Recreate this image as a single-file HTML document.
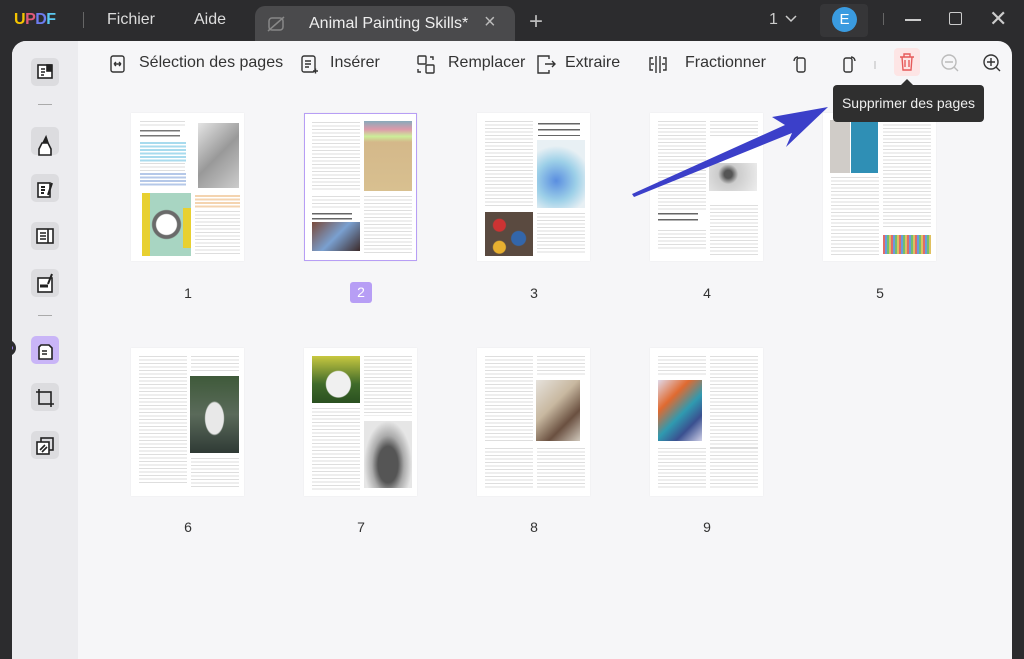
<!DOCTYPE html>
<html><head><meta charset="utf-8">
<style>
*{margin:0;padding:0;box-sizing:border-box}
body{width:1024px;height:659px;background:#2c2c2e;font-family:"Liberation Sans",sans-serif;position:relative;overflow:hidden}
.a{position:absolute}
.win{left:12px;top:41px;width:1000px;height:618px;background:#f6f6f8;border-radius:14px 14px 0 0;overflow:hidden}
.side{left:0;top:0;width:66px;height:618px;background:#ececef}
.sb{position:absolute;left:19px;width:28px;height:28px;border-radius:5px;background:#dcdcdf}
.tb{color:#333;font-size:16px;top:13px}
.pg{position:absolute;width:113px;height:148px;background:#fff;box-shadow:0 0 2px rgba(0,0,0,.06)}
.t{position:absolute;background:repeating-linear-gradient(#dedede 0 1px,transparent 1px 3.5px)}
.im{position:absolute}
.num{position:absolute;font-size:14px;color:#333;width:20px;text-align:center}
svg{position:absolute}
</style></head><body>
<div class="a" style="left:14px;top:11px;font-weight:bold;font-size:16px;letter-spacing:-0.5px"><span style="color:#f5c400">U</span><span style="color:#e05a7a">P</span><span style="color:#6d7cf0">D</span><span style="color:#5ac8f0">F</span></div>
<div class="a" style="left:83px;top:12px;width:1px;height:16px;background:#666"></div>
<div class="a" style="left:107px;top:11px;color:#ddd;font-size:16px">Fichier</div>
<div class="a" style="left:194px;top:11px;color:#ddd;font-size:16px">Aide</div>
<div class="a" style="left:255px;top:6px;width:260px;height:40px;background:#4a4a4c;border-radius:10px 10px 0 0"></div>
<svg style="left:266px;top:14px" width="20" height="20" viewBox="0 0 20 20" fill="none" stroke="#888" stroke-width="1.5"><rect x="3" y="4" width="14" height="12" rx="3"/><path d="M2 17L18 3"/></svg>
<div class="a" style="left:309px;top:15px;color:#eee;font-size:16px">Animal Painting Skills*</div>
<div class="a" style="left:484px;top:11px;color:#bbb;font-size:20px">×</div>
<div class="a" style="left:529px;top:8px;color:#bbb;font-size:24px">+</div>
<div class="a" style="left:769px;top:11px;color:#ccc;font-size:16px">1</div>
<svg style="left:784px;top:14px" width="14" height="10" viewBox="0 0 14 10" fill="none" stroke="#ccc" stroke-width="1.5"><path d="M2 2l5 5 5-5"/></svg>
<div class="a" style="left:820px;top:4px;width:48px;height:33px;background:#363638;border-radius:4px"></div>
<div class="a" style="left:832px;top:7px;width:25px;height:25px;border-radius:50%;background:#3a9be0;color:#fff;font-size:15px;text-align:center;line-height:25px">E</div>
<div class="a" style="left:883px;top:13px;width:1px;height:12px;background:#666"></div>
<div class="a" style="left:905px;top:19px;width:16px;height:1.5px;background:#ccc"></div>
<div class="a" style="left:949px;top:12px;width:13px;height:13px;border:1.5px solid #ccc;border-radius:2px"></div>
<div class="a" style="left:989px;top:6px;color:#ccc;font-size:22px">✕</div>

<div class="a win">
 <div class="a side"></div>
 <div class="sb" style="top:17px"></div>
 <div class="a" style="left:26px;top:63px;width:14px;height:1px;background:#aaa"></div>
 <div class="sb" style="top:86px"></div>
 <div class="sb" style="top:133px"></div>
 <div class="sb" style="top:181px"></div>
 <div class="sb" style="top:228px"></div>
 <div class="a" style="left:26px;top:274px;width:14px;height:1px;background:#aaa"></div>
 <div class="sb" style="top:295px;background:#c9b5f7"></div>
 <div class="sb" style="top:342px"></div>
 <div class="sb" style="top:390px"></div>
 <svg style="left:19px;top:17px" width="28" height="480" viewBox="0 0 28 480" fill="none" stroke="#222" stroke-width="1.6">
  <rect x="7" y="7" width="14" height="13" fill="#fff"/><path d="M10 11h4M10 14h4M10 17h3"/><rect x="16" y="7" width="4" height="6" fill="#222"/>
  <path d="M8 91l3-6h6l3 6v6H8z" fill="#fff"/><path d="M12 85l3-6 2 6" fill="#222"/>
  <rect x="7" y="125" width="12" height="14" fill="#fff"/><path d="M10 129h4M10 132h4M10 135h3M17 137l4-12" stroke-width="2"/>
  <rect x="6" y="171" width="16" height="14" fill="#fff"/><path d="M9 175h6M9 178h6M9 181h6M17 171v14"/>
  <rect x="7" y="220" width="14" height="14" fill="#fff"/><path d="M9 228h8" stroke-width="3"/><path d="M17 226l4-10" stroke-width="2"/>
  <path d="M10 287h8l3 3v11H8v-12z" fill="#fff"/><path d="M11 293h5M11 296h5"/>
  <rect x="8" y="334" width="12" height="12"/><path d="M8 331v3M5 334h3M20 346v3M20 346h3"/>
  <rect x="10" y="380" width="12" height="12"/><rect x="6" y="384" width="12" height="12" fill="#fff"/><path d="M9 392l5-5M11 394l5-5"/>
 </svg>
 <div class="a" style="left:-4px;top:299px;width:8px;height:16px;background:#2c2c2e;border-radius:0 8px 8px 0"></div>
 <div class="a" style="left:-3px;top:305px;width:4px;height:4px;border-radius:50%;background:#9d82f0"></div>

 <svg style="left:96px;top:12px" width="900" height="24" viewBox="0 0 900 24" fill="none" stroke="#333" stroke-width="1.4">
  <rect x="3" y="3" width="13" height="16" rx="2"/><path d="M6 11h7M6 11l2-2M6 11l2 2M13 11l-2-2M13 11l-2 2"/>
  <rect x="194" y="3" width="13" height="16" rx="2"/><path d="M197 8h6M197 11h6M197 14h4M205 18h5M207.5 15.5v5"/>
  <rect x="310" y="3" width="8" height="8" rx="1"/><rect x="318" y="12" width="8" height="8" rx="1"/><path d="M322 4h3v3M313 19h-3v-3"/>
  <path d="M441 6V3h-11v17h11v-3M437 11h10M444 8l3 3-3 3"/>
  <path d="M548 3v17M552 3v17M543 11h3M554 11h3M545 5h-3v12h3M555 5h3v12h-3"/>
  <rect x="689" y="5" width="8" height="14" rx="2"/><path d="M686 8a4 4 0 0 1 4-4"/>
  <rect x="736" y="5" width="8" height="14" rx="2"/><path d="M747 8a4 4 0 0 0-4-4"/>
  <path d="M767 8v8" stroke="#ccc"/>
  <circle cx="841" cy="9" r="7" stroke="#bbb"/><path d="M837 9h8M846 14l4 4" stroke="#bbb"/>
  <circle cx="883" cy="9" r="7"/><path d="M879 9h8M883 5v8M888 14l4 4"/>
 </svg>
 <div class="a tb" style="left:127px">Sélection des pages</div>
 <div class="a tb" style="left:318px">Insérer</div>
 <div class="a tb" style="left:436px">Remplacer</div>
 <div class="a tb" style="left:553px">Extraire</div>
 <div class="a tb" style="left:673px">Fractionner</div>
 <div class="a" style="left:882px;top:7px;width:26px;height:28px;background:#fde5e5;border-radius:4px"></div>
 <svg style="left:886px;top:11px" width="18" height="20" viewBox="0 0 18 20" fill="none" stroke="#e65a5a" stroke-width="1.4"><path d="M2 5h14M6 5V2h6v3M4 5l1 13h8l1-13M7 8v7M11 8v7"/></svg>
</div>

<div class="pg" style="left:131px;top:113px">
 <div class="t" style="left:9px;top:8px;width:45px;height:7px"></div>
 <div class="im" style="left:9px;top:17px;width:40px;height:9px;background:repeating-linear-gradient(#777 0 1.5px,transparent 1.5px 5px)"></div>
 <div class="im" style="left:9px;top:29px;width:46px;height:20px;background:repeating-linear-gradient(#a8dbee 0 2px,transparent 2px 3.5px)"></div>
 <div class="t" style="left:9px;top:50px;width:45px;height:9px"></div>
 <div class="im" style="left:9px;top:60px;width:46px;height:14px;background:repeating-linear-gradient(#b5c8e8 0 2px,transparent 2px 3.5px)"></div>
 <div class="im" style="left:67px;top:10px;width:41px;height:65px;background:linear-gradient(135deg,#e4e4e4,#999 50%,#ccc)"></div>
 <div class="im" style="left:11px;top:80px;width:49px;height:63px;background:radial-gradient(circle at 50% 50%,#fff 0 10px,#6a6a6a 11px 14px,#a8d5c2 15px),#a8d5c2"></div>
 <div class="im" style="left:11px;top:80px;width:8px;height:63px;background:#e8d030"></div>
 <div class="im" style="left:52px;top:95px;width:8px;height:40px;background:#e8d030"></div>
 <div class="im" style="left:64px;top:82px;width:45px;height:14px;background:repeating-linear-gradient(#f4d4b0 0 2px,transparent 2px 3.5px)"></div>
 <div class="t" style="left:64px;top:98px;width:45px;height:44px"></div>
</div>
<div class="pg" style="left:304px;top:113px;border:1.5px solid #b79ef5">
 <div class="t" style="left:7px;top:8px;width:48px;height:70px"></div>
 <div class="t" style="left:7px;top:82px;width:48px;height:14px"></div>
 <div class="im" style="left:7px;top:99px;width:40px;height:8px;background:repeating-linear-gradient(#666 0 1.5px,transparent 1.5px 5px)"></div>
 <div class="im" style="left:7px;top:108px;width:48px;height:29px;background:linear-gradient(135deg,#7a4a3a,#7aa0d0 50%,#3c2a2a)"></div>
 <div class="im" style="left:59px;top:7px;width:48px;height:70px;background:linear-gradient(#8ab 0,#d9a 12%,#ce9 22%,#d4b88a 30%,#d8c090 100%)"></div>
 <div class="t" style="left:59px;top:82px;width:48px;height:58px"></div>
</div>
<div class="pg" style="left:477px;top:113px">
 <div class="t" style="left:8px;top:8px;width:48px;height:85px"></div>
 <div class="im" style="left:61px;top:10px;width:42px;height:13px;background:repeating-linear-gradient(#666 0 1.5px,transparent 1.5px 6px)"></div>
 <div class="im" style="left:60px;top:27px;width:48px;height:68px;background:radial-gradient(circle at 40% 60%,#5a8ee0,#9dd0e8 40%,#e8f0f4 70%)"></div>
 <div class="im" style="left:8px;top:99px;width:48px;height:44px;background:radial-gradient(circle at 30% 30%,#c33 0 6px,transparent 7px),radial-gradient(circle at 70% 60%,#3366aa 0 7px,transparent 8px),radial-gradient(circle at 30% 80%,#e8b030 0 6px,transparent 7px),#5a4a40"></div>
 <div class="t" style="left:60px;top:100px;width:48px;height:42px"></div>
</div>
<div class="pg" style="left:650px;top:113px">
 <div class="t" style="left:8px;top:8px;width:48px;height:90px"></div>
 <div class="t" style="left:60px;top:8px;width:48px;height:15px"></div>
 <div class="im" style="left:59px;top:50px;width:48px;height:28px;background:radial-gradient(circle at 40% 40%,#555 0 4px,#ccc 10px,#eee)"></div>
 <div class="t" style="left:60px;top:92px;width:48px;height:50px"></div>
 <div class="im" style="left:8px;top:100px;width:40px;height:12px;background:repeating-linear-gradient(#666 0 1.5px,transparent 1.5px 6px)"></div>
 <div class="t" style="left:8px;top:117px;width:48px;height:20px"></div>
</div>
<div class="pg" style="left:823px;top:113px">
 <div class="im" style="left:7px;top:7px;width:20px;height:53px;background:#d0ccc8"></div>
 <div class="im" style="left:28px;top:7px;width:27px;height:53px;background:#2f8fb5"></div>
 <div class="t" style="left:60px;top:8px;width:48px;height:106px"></div>
 <div class="t" style="left:8px;top:64px;width:48px;height:78px"></div>
 <div class="im" style="left:60px;top:122px;width:48px;height:19px;background:repeating-linear-gradient(90deg,#e06a6a 0 2px,#6a9ae0 2px 4px,#70c070 4px 6px,#e0c060 6px 8px)"></div>
</div>
<div class="num" style="left:178px;top:285px">1</div>
<div class="a" style="left:350px;top:282px;width:22px;height:21px;background:#b79ef5;border-radius:3px;color:#fff;font-size:14px;text-align:center;line-height:21px">2</div>
<div class="num" style="left:524px;top:285px">3</div>
<div class="num" style="left:697px;top:285px">4</div>
<div class="num" style="left:870px;top:285px">5</div>

<div class="pg" style="left:131px;top:348px">
 <div class="t" style="left:8px;top:8px;width:48px;height:128px"></div>
 <div class="t" style="left:60px;top:8px;width:48px;height:17px"></div>
 <div class="im" style="left:59px;top:28px;width:49px;height:77px;background:radial-gradient(ellipse at 50% 55%,#e8e8e8 0 9px,transparent 10px),linear-gradient(#3f5a3a,#5a6a5a 50%,#2f3a35)"></div>
 <div class="t" style="left:60px;top:110px;width:48px;height:30px"></div>
</div>
<div class="pg" style="left:304px;top:348px">
 <div class="im" style="left:8px;top:8px;width:48px;height:47px;background:radial-gradient(ellipse at 55% 60%,#f0f0f0 0 12px,transparent 13px),linear-gradient(#c8c840,#3f6a2a 60%,#2a5020)"></div>
 <div class="t" style="left:60px;top:8px;width:48px;height:60px"></div>
 <div class="t" style="left:8px;top:60px;width:48px;height:82px"></div>
 <div class="im" style="left:60px;top:73px;width:48px;height:67px;background:radial-gradient(ellipse at 50% 65%,#555 0 10px,#aaa 16px,#e6e6e6 24px)"></div>
</div>
<div class="pg" style="left:477px;top:348px">
 <div class="t" style="left:8px;top:8px;width:48px;height:86px"></div>
 <div class="t" style="left:60px;top:8px;width:48px;height:20px"></div>
 <div class="im" style="left:59px;top:32px;width:44px;height:61px;background:linear-gradient(135deg,#e6e2dc,#c8b8a0 40%,#6a5040 70%,#d0c8bc)"></div>
 <div class="t" style="left:8px;top:100px;width:48px;height:40px"></div>
 <div class="t" style="left:60px;top:100px;width:48px;height:40px"></div>
</div>
<div class="pg" style="left:650px;top:348px">
 <div class="t" style="left:8px;top:8px;width:48px;height:20px"></div>
 <div class="im" style="left:8px;top:32px;width:44px;height:61px;background:linear-gradient(135deg,#e0d8e8,#e06a30 30%,#2f9ab0 55%,#3a5090 75%,#d0d0e8)"></div>
 <div class="t" style="left:60px;top:8px;width:48px;height:92px"></div>
 <div class="t" style="left:8px;top:100px;width:48px;height:40px"></div>
 <div class="t" style="left:60px;top:100px;width:48px;height:40px"></div>
</div>
<div class="num" style="left:178px;top:519px">6</div>
<div class="num" style="left:351px;top:519px">7</div>
<div class="num" style="left:524px;top:519px">8</div>
<div class="num" style="left:697px;top:519px">9</div>

<svg class="a" style="left:620px;top:95px" width="220" height="120" viewBox="0 0 220 120"><path d="M14 102L172 38L166 52L208 12L152 22L165 30L12 99Z" fill="#3b3fc9"/></svg>

<div class="a" style="left:833px;top:85px;width:151px;height:37px;background:#2f2f2f;border-radius:4px;color:#eee;font-size:14px;line-height:37px;text-align:center">Supprimer des pages</div>
<div class="a" style="left:901px;top:79px;width:0;height:0;border:6px solid transparent;border-top:0;border-bottom-color:#2f2f2f"></div>
</body></html>
